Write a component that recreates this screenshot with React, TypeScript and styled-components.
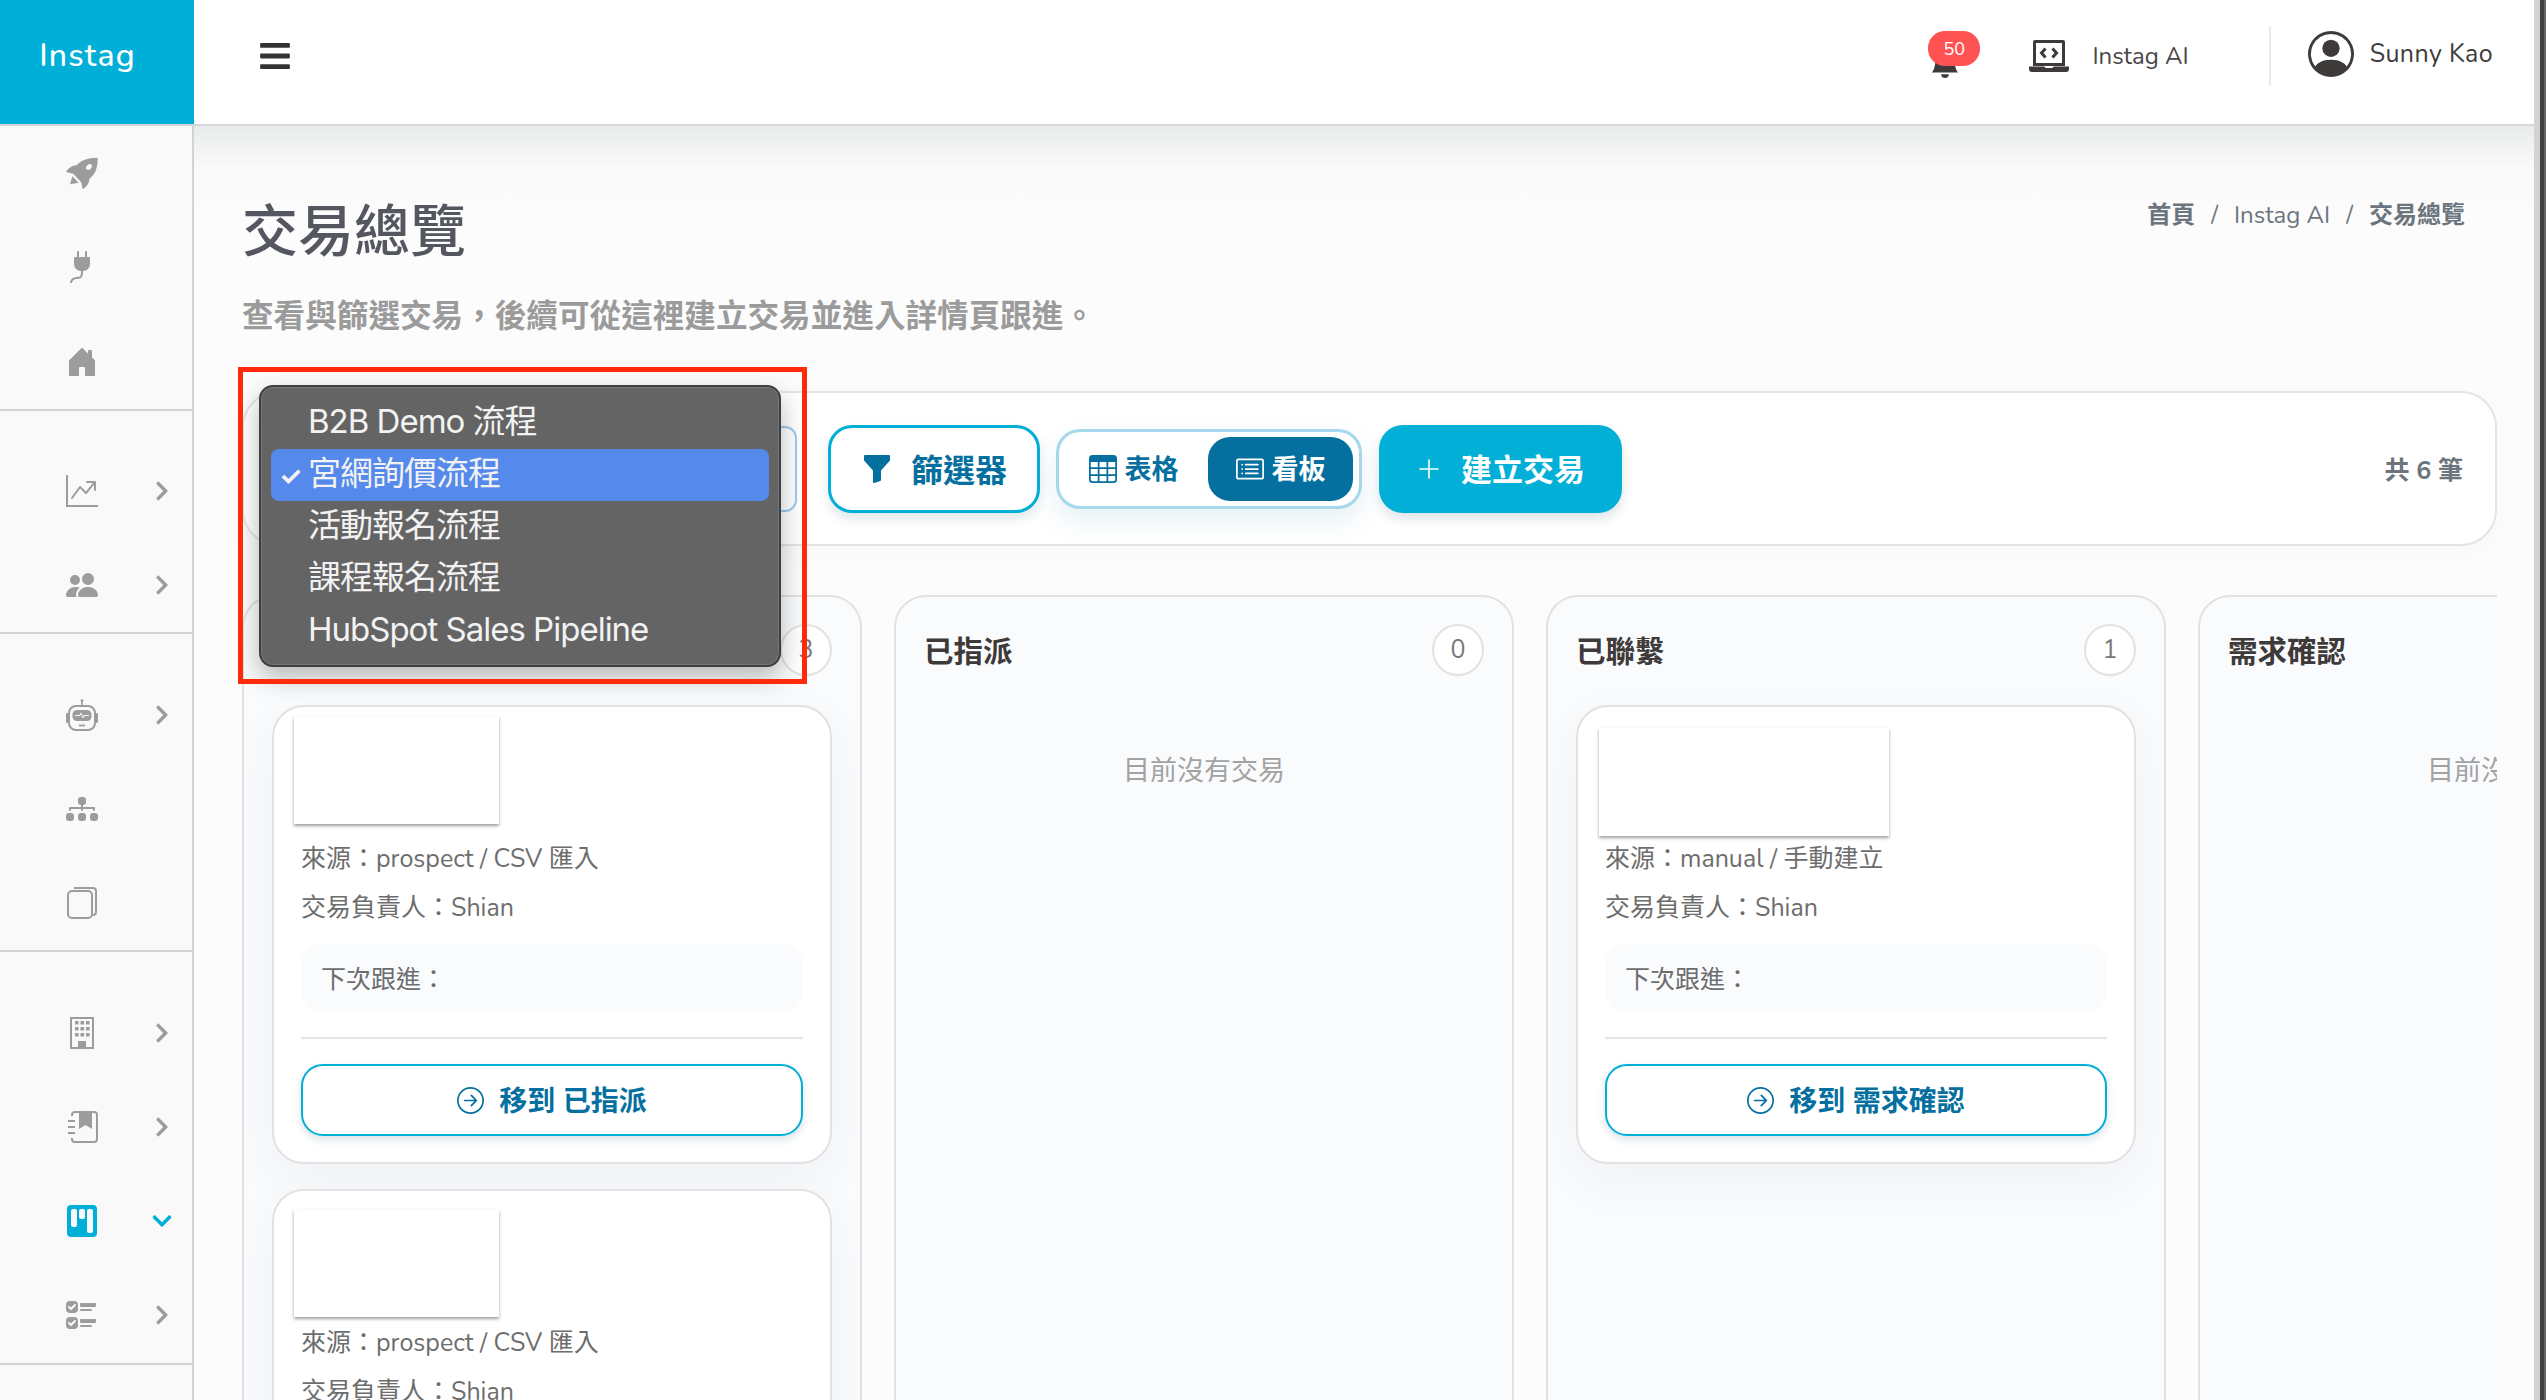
import React from "react";
import styled, { createGlobalStyle } from "styled-components";
import {
  BsPlugFill, BsHouseDoorFill, BsGraphUpArrow, BsPeopleFill, BsDiagram3Fill,
  BsKanbanFill, BsUiChecks, BsBellFill,
  BsPersonCircle, BsFunnelFill, BsTable, BsCardList, BsPlusLg, BsArrowRightCircle,
} from "react-icons/bs";
import { FaBars, FaChevronDown, FaChevronRight } from "react-icons/fa";

const LATIN = `"Nunito", "Lato", "Noto Sans CJK TC", sans-serif`;

const Global = createGlobalStyle`
  html, body { margin: 0; padding: 0; width: 2546px; height: 1400px; overflow: hidden; background: #fbfcfb; }
  body { font-family: ${LATIN}; color: #444; }
  * { box-sizing: border-box; }
`;

const Shell = styled.div`
  position: relative;
  display: grid;
  grid-template-columns: 194px 1fr 12px;
  width: 2546px;
  height: 1400px;
  overflow: hidden;
`;

const Sidebar = styled.aside`
  background: #f9f9f9;
  border-right: 2px solid #d2d4d4;
  height: 1400px;
`;

const Logo = styled.div`
  height: 126px;
  margin-right: -2px;
  padding: 0 19px 14px 0;
  background: #00afd7;
  color: #fff;
  font-size: 32px;
  font-weight: 500;
  letter-spacing: 1.2px;
  display: flex;
  align-items: center;
  justify-content: center;
  border-bottom: 2px solid #d2d4d4;
`;

const NavGroup = styled.nav<{ $first?: boolean }>`
  padding-top: ${(p) => (p.$first ? "0" : "33px")};
  border-bottom: 2px solid #d2d4d4;
`;

const NavRow = styled.div<{ $active?: boolean }>`
  height: 94.3px;
  display: flex;
  align-items: center;
  color: ${(p) => (p.$active ? "#00afd7" : "#9c9c9c")};
`;

const NavIcon = styled.span`
  flex: 0 0 164px;
  display: flex;
  justify-content: center;
  font-size: 32px;
`;

const NavArrow = styled.span`
  flex: 0 0 24px;
  margin-left: -14px;
  display: flex;
  justify-content: center;
  font-size: 22px;
`;

const NavSvg = styled.svg`
  width: 32px;
  height: 32px;
`;

const Main = styled.main`
  min-width: 0;
  height: 1400px;
  display: flex;
  flex-direction: column;
  overflow: hidden;
`;

const Header = styled.header`
  flex: none;
  height: 126px;
  background: #fff;
  border-bottom: 2px solid #d6d7d7;
  display: flex;
  align-items: center;
  padding-left: 64px;
  color: #3e3a3a;
`;

const Burger = styled.span`
  display: flex;
  font-size: 34px;
  margin-top: -12px;
  color: #333;
`;

const HeaderRight = styled.div`
  margin-left: auto;
  display: flex;
  align-items: center;
  height: 60px;
  margin-top: -12px;
`;

const BellWrap = styled.div`
  position: relative;
  display: flex;
  font-size: 30px;
  margin-top: 14px;
  margin-right: 69px;
  color: #3e3a3a;
`;

const Badge = styled.span`
  position: absolute;
  left: -2px;
  top: -17px;
  width: 52px;
  height: 35px;
  border-radius: 17px;
  background: #ff5252;
  color: #fff;
  font-size: 18px;
  display: flex;
  align-items: center;
  justify-content: center;
`;

const HeaderLink = styled.div`
  display: flex;
  align-items: center;
  font-size: 24px;
  color: #4a4646;
`;

const LaptopGlyph = styled.svg`
  width: 40px;
  height: 32px;
  margin-right: 23px;
  color: #3e3a3a;
`;

const HeaderDivider = styled.div`
  width: 2px;
  height: 60px;
  background: #e3edf3;
  margin: 0 37px 0 80px;
`;

const UserName = styled.div`
  display: flex;
  align-items: center;
  gap: 16px;
  font-size: 25px;
  letter-spacing: .4px;
  padding-right: 41px;
  margin-top: -4px;
  color: #3e3a3a;
  & svg { font-size: 46px; }
`;

const Content = styled.div`
  flex: 1;
  min-height: 0;
  padding: 0 37px 0 48px;
  background: linear-gradient(180deg, #e9ebeb 0, #f8f9f8 40px, #fbfcfb 90px);
`;

const TitleRow = styled.div`
  display: flex;
  justify-content: space-between;
  align-items: flex-start;
  height: 168px;
  padding-top: 69px;
`;

const Title = styled.h1`
  margin: 0;
  font-size: 56px;
  font-weight: 500;
  line-height: 76px;
  color: #54575f;
`;

const Crumbs = styled.div`
  display: flex;
  gap: 16px;
  font-size: 24px;
  line-height: 30px;
  padding: 0 32px 0 0;
  margin-top: 5px;
  color: #6c757d;
  & b { font-weight: 700; }
`;

const Subtitle = styled.p`
  margin: 0;
  font-size: 31.6px;
  line-height: 46px;
  font-weight: 700;
  color: #9b9b9b;
  white-space: nowrap;
`;

const Toolbar = styled.section`
  margin-top: 51px;
  height: 155px;
  background: #fff;
  border: 2px solid #e4e4e4;
  border-radius: 36px;
  display: flex;
  align-items: center;
  padding: 0 32px 0 28px;
  box-shadow: 0 8px 30px rgba(30, 50, 70, .02);
`;

const SelectBox = styled.div`
  width: 525px;
  height: 86px;
  border: 2px solid #9ccbf0;
  border-radius: 12px;
  background: #fff;
  margin-right: 31px;
  display: flex;
  align-items: center;
  padding-left: 24px;
  font-size: 28px;
`;

const FilterButton = styled.button`
  width: 212px;
  height: 88px;
  background: #fff;
  border: 3px solid #00afd7;
  border-radius: 24px;
  color: #05709f;
  font: 700 32px ${LATIN};
  display: flex;
  align-items: center;
  justify-content: center;
  gap: 18px;
  box-shadow: 0 6px 12px rgba(0, 60, 90, .12);
`;

const Toggle = styled.div`
  margin-left: 16px;
  width: 306px;
  height: 80px;
  border: 3px solid #a5d8ec;
  border-radius: 24px;
  background: #fff;
  display: flex;
  align-items: center;
  padding-right: 6px;
  box-shadow: 0 12px 28px rgba(0, 110, 160, .1);
`;

const ToggleItem = styled.div<{ $on?: boolean }>`
  flex: ${(p) => (p.$on ? "0 0 145px" : "1")};
  height: 64px;
  border-radius: 22px;
  background: ${(p) => (p.$on ? "#05709f" : "transparent")};
  color: ${(p) => (p.$on ? "#fff" : "#05709f")};
  display: flex;
  align-items: center;
  justify-content: center;
  gap: 8px;
  font-size: 27px;
  font-weight: 700;
  & svg { font-size: 28px; }
`;

const CreateButton = styled.button`
  margin-left: 17px;
  width: 243px;
  height: 88px;
  background: #02afd6;
  border: 0;
  border-radius: 24px;
  color: #fff;
  font: 700 31px ${LATIN};
  display: flex;
  align-items: center;
  justify-content: center;
  gap: 19px;
  box-shadow: 0 6px 12px rgba(0, 60, 90, .14);
  & svg { font-size: 26px; }
`;

const Total = styled.div`
  margin-left: auto;
  font-size: 25px;
  font-weight: 700;
  color: #6c757d;
`;

const Board = styled.div`
  margin-top: 49px;
  display: flex;
  gap: 32px;
  overflow: hidden;
  height: 900px;
`;

const Column = styled.section`
  flex: 0 0 620px;
  height: 900px;
  background: #fafbfd;
  border: 2px solid #e2e2e2;
  border-bottom: 0;
  border-radius: 32px 32px 0 0;
  padding: 27px 28px 0;
`;

const ColumnHead = styled.div`
  display: flex;
  align-items: center;
  justify-content: space-between;
  height: 52px;
  margin-bottom: 29px;
  font-size: 29.5px;
  font-weight: 700;
  color: #3f3a3a;
`;

const Count = styled.span`
  width: 52px;
  height: 52px;
  border: 2px solid #e2e2e2;
  border-radius: 50%;
  background: #fff;
  color: #777;
  font-size: 25px;
  font-weight: 400;
  display: flex;
  align-items: center;
  justify-content: center;
`;

const Empty = styled.div`
  text-align: center;
  font-size: 27px;
  line-height: 40px;
  color: #a2a2a2;
  margin-top: 76px;
  white-space: nowrap;
`;

const Card = styled.article`
  height: 459px;
  background: #fff;
  border: 2px solid #e2e2e2;
  border-radius: 32px;
  padding: 0 27px;
  margin-bottom: 25px;
  box-shadow: 0 18px 50px rgba(60, 80, 100, .05);
`;

const ThumbSlot = styled.div<{ $top: number }>`
  height: 134px;
  padding-top: ${(p) => p.$top}px;
`;

const Thumb = styled.div<{ $w: number; $left: number }>`
  width: ${(p) => p.$w}px;
  height: 108px;
  margin-left: ${(p) => p.$left}px;
  background: #fff;
  box-shadow: 0 2px 3px rgba(0, 0, 0, .38);
`;

const Meta = styled.div<{ $first?: boolean }>`
  font-size: 25px;
  line-height: 36px;
  color: #6d6d6d;
  margin-top: ${(p) => (p.$first ? "0" : "13px")};
  white-space: nowrap;
`;

const NextStep = styled.div`
  height: 68px;
  margin-top: 18px;
  border-radius: 20px;
  background: #fafbfd;
  padding: 0 20px;
  display: flex;
  align-items: center;
  font-size: 25px;
  color: #6d6d6d;
`;

const Rule = styled.hr`
  border: 0;
  height: 2px;
  margin: 25px 0;
  background: #e6e6e6;
`;

const MoveButton = styled.button`
  width: 100%;
  height: 72px;
  background: #fff;
  border: 2px solid #00afd7;
  border-radius: 22px;
  color: #05709f;
  font: 700 28px ${LATIN};
  display: flex;
  align-items: center;
  justify-content: center;
  gap: 15px;
  box-shadow: 0 4px 8px rgba(0, 60, 90, .14);
  & svg { font-size: 27px; }
`;

const Track = styled.div`
  height: 1400px;
  background: linear-gradient(90deg, #d2d4d2 0 6px, #443f3f 6px 10px, #666 10px 12px);
`;

const Menu = styled.ul`
  position: absolute;
  left: 259px;
  top: 385px;
  width: 522px;
  height: 282px;
  margin: 0;
  padding: 10px 10px;
  list-style: none;
  background: #646464;
  border: 2px solid #3f3f3f;
  border-radius: 14px;
  box-shadow: 0 0 0 1px rgba(255, 255, 255, .12) inset, 0 10px 26px rgba(0, 0, 0, .28);
  font-family: Inter, "Noto Sans CJK TC", sans-serif;
`;

const MenuItem = styled.li<{ $on?: boolean }>`
  position: relative;
  height: 52px;
  padding-left: 37px;
  border-radius: 8px;
  background: ${(p) => (p.$on ? "#5589ec" : "transparent")};
  color: #f2f2f2;
  font-size: 33px;
  letter-spacing: -1px;
  line-height: 49px;
  white-space: nowrap;
`;

const Tick = styled.span`
  position: absolute;
  left: 8px;
  top: 2px;
  font-size: 26px;
  font-weight: 700;
`;

const Marker = styled.div`
  position: absolute;
  left: 238px;
  top: 367px;
  width: 569px;
  height: 317px;
  border: 5px solid #ff2a0a;
  pointer-events: none;
`;

const RocketGlyph = () => (
  <NavSvg viewBox="0 0 96 96" fill="currentColor">
    <path d="M0 45C8 32 20 25 32 25 42 12 62 2 95 2 96 35 85 55 70 65 70 78 62 90 50 96L45 75 22 50Z" />
    <path d="M12 82l7-24 19 19z" />
    <ellipse cx="69" cy="30" rx="10" ry="7" transform="rotate(-45 69 30)" fill="#f9f9f9" />
  </NavSvg>
);

const RobotGlyph = () => (
  <NavSvg viewBox="0 0 32 32" fill="none" stroke="currentColor">
    <path strokeWidth="1.6" d="M16 1v6" />
    <circle cx="16" cy="1.6" r="1.4" fill="currentColor" stroke="none" />
    <rect x="3" y="7" width="26" height="24" rx="7" strokeWidth="2" />
    <rect x="0" y="14" width="2.4" height="10" rx="1.2" fill="currentColor" stroke="none" />
    <rect x="29.6" y="14" width="2.4" height="10" rx="1.2" fill="currentColor" stroke="none" />
    <rect x="6.5" y="11" width="19" height="11" rx="4.5" fill="currentColor" stroke="none" />
    <path strokeWidth="1.1" stroke="#f9f9f9" d="M9 16.500h4.500l1.500-2 2 4 1.500-2h4.500" />
    <path strokeWidth="1.8" d="M13 26.500h6" />
  </NavSvg>
);

const LayersGlyph = () => (
  <NavSvg viewBox="0 0 32 32" fill="none" stroke="currentColor" strokeWidth="2">
    <rect x="2" y="4" width="24" height="27" rx="4" />
    <path d="M8 1h19a3 3 0 0 1 3 3v21a3 3 0 0 1-3 3" />
  </NavSvg>
);

const BuildingGlyph = () => (
  <NavSvg viewBox="0 0 32 32" fill="currentColor">
    <path fillRule="evenodd" d="M4 0h24v32H4zm2 2v28h20V2z" />
    {[6, 12, 18].flatMap((y) =>
      [9, 14.5, 20].map((x) => <rect key={`${x}-${y}`} x={x} y={y - 2} width="3.6" height="3.6" rx=".5" />),
    )}
    <rect x="12" y="24" width="8" height="7" />
  </NavSvg>
);

const JournalGlyph = () => (
  <NavSvg viewBox="0 0 32 32">
    <path fill="none" stroke="currentColor" strokeWidth="2" d="M6 5V4a3 3 0 0 1 3-3h19a3 3 0 0 1 3 3v24a3 3 0 0 1-3 3H9a3 3 0 0 1-3-3v-1" />
    <path fill="currentColor" d="M13 1h13v17l-6.500-4-6.500 4z" />
    <path fill="none" stroke="currentColor" strokeWidth="2" d="M2 10h7M2 16h7M2 22h7" />
  </NavSvg>
);

const LaptopCode = () => (
  <LaptopGlyph viewBox="0 0 40 32">
    <path fill="currentColor" fillRule="evenodd" d="M6 0h28a2 2 0 0 1 2 2v24H4V2a2 2 0 0 1 2-2zm1 3v20h26V3z" />
    <path fill="currentColor" d="M0 26.500h15l2 1.500h6l2-1.500h15V29a3 3 0 0 1-3 3H3a3 3 0 0 1-3-3z" />
    <path fill="none" stroke="currentColor" strokeWidth="3" d="M16.500 8.500L12.500 13l4 4.500M23.500 8.500l4 4.500-4 4.500" />
  </LaptopGlyph>
);

type Nav = { icon: React.ReactNode; arrow?: boolean; active?: boolean };
const navGroups: Nav[][] = [
  [{ icon: <RocketGlyph /> }, { icon: <BsPlugFill /> }, { icon: <BsHouseDoorFill /> }],
  [{ icon: <BsGraphUpArrow />, arrow: true }, { icon: <BsPeopleFill />, arrow: true }],
  [{ icon: <RobotGlyph />, arrow: true }, { icon: <BsDiagram3Fill /> }, { icon: <LayersGlyph /> }],
  [
    { icon: <BuildingGlyph />, arrow: true },
    { icon: <JournalGlyph />, arrow: true },
    { icon: <BsKanbanFill />, arrow: true, active: true },
    { icon: <BsUiChecks />, arrow: true },
  ],
];

type Deal = { source: string; next: string; thumb: number; left: number; top: number };
const columns: { title: string; count: number; deals: Deal[] }[] = [
  {
    title: "新名單",
    count: 3,
    deals: [
      { source: "prospect / CSV 匯入", next: "已指派", thumb: 205, left: -7, top: 9 },
      { source: "prospect / CSV 匯入", next: "已指派", thumb: 205, left: -7, top: 18 },
    ],
  },
  { title: "已指派", count: 0, deals: [] },
  { title: "已聯繫", count: 1, deals: [{ source: "manual / 手動建立", next: "需求確認", thumb: 290, left: -6, top: 21 }] },
  { title: "需求確認", count: 0, deals: [] },
];

const menu = ["B2B Demo 流程", "宮網詢價流程", "活動報名流程", "課程報名流程", "HubSpot Sales Pipeline"];

export default function App() {
  return (
    <Shell>
      <Global />
      <Sidebar>
        <Logo>Instag</Logo>
        {navGroups.map((g, i) => (
          <NavGroup key={i} $first={i === 0}>
            {g.map((n, j) => (
              <NavRow key={j} $active={n.active}>
                <NavIcon>{n.icon}</NavIcon>
                {n.arrow && <NavArrow>{n.active ? <FaChevronDown /> : <FaChevronRight />}</NavArrow>}
              </NavRow>
            ))}
          </NavGroup>
        ))}
      </Sidebar>
      <Main>
        <Header>
          <Burger><FaBars /></Burger>
          <HeaderRight>
            <BellWrap>
              <BsBellFill />
              <Badge>50</Badge>
            </BellWrap>
            <HeaderLink><LaptopCode />Instag AI</HeaderLink>
            <HeaderDivider />
            <UserName><BsPersonCircle />Sunny Kao</UserName>
          </HeaderRight>
        </Header>
        <Content>
          <TitleRow>
            <Title>交易總覽</Title>
            <Crumbs><b>首頁</b><span>/</span><span>Instag AI</span><span>/</span><b>交易總覽</b></Crumbs>
          </TitleRow>
          <Subtitle>查看與篩選交易，後續可從這裡建立交易並進入詳情頁跟進。</Subtitle>
          <Toolbar>
            <SelectBox>宮網詢價流程</SelectBox>
            <FilterButton><BsFunnelFill />篩選器</FilterButton>
            <Toggle>
              <ToggleItem><BsTable />表格</ToggleItem>
              <ToggleItem $on><BsCardList />看板</ToggleItem>
            </Toggle>
            <CreateButton><BsPlusLg />建立交易</CreateButton>
            <Total>共 6 筆</Total>
          </Toolbar>
          <Board>
            {columns.map((c) => (
              <Column key={c.title}>
                <ColumnHead>{c.title}<Count>{c.count}</Count></ColumnHead>
                {c.deals.length === 0 && <Empty>目前沒有交易</Empty>}
                {c.deals.map((d, i) => (
                  <Card key={i}>
                    <ThumbSlot $top={d.top}><Thumb $w={d.thumb} $left={d.left} /></ThumbSlot>
                    <Meta $first>來源：{d.source}</Meta>
                    <Meta>交易負責人：Shian</Meta>
                    <NextStep>下次跟進：</NextStep>
                    <Rule />
                    <MoveButton><BsArrowRightCircle />移到 {d.next}</MoveButton>
                  </Card>
                ))}
              </Column>
            ))}
          </Board>
        </Content>
      </Main>
      <Track />
      <Menu>
        {menu.map((m, i) => (
          <MenuItem key={m} $on={i === 1}>{i === 1 && <Tick>✓</Tick>}{m}</MenuItem>
        ))}
      </Menu>
      <Marker />
    </Shell>
  );
}
